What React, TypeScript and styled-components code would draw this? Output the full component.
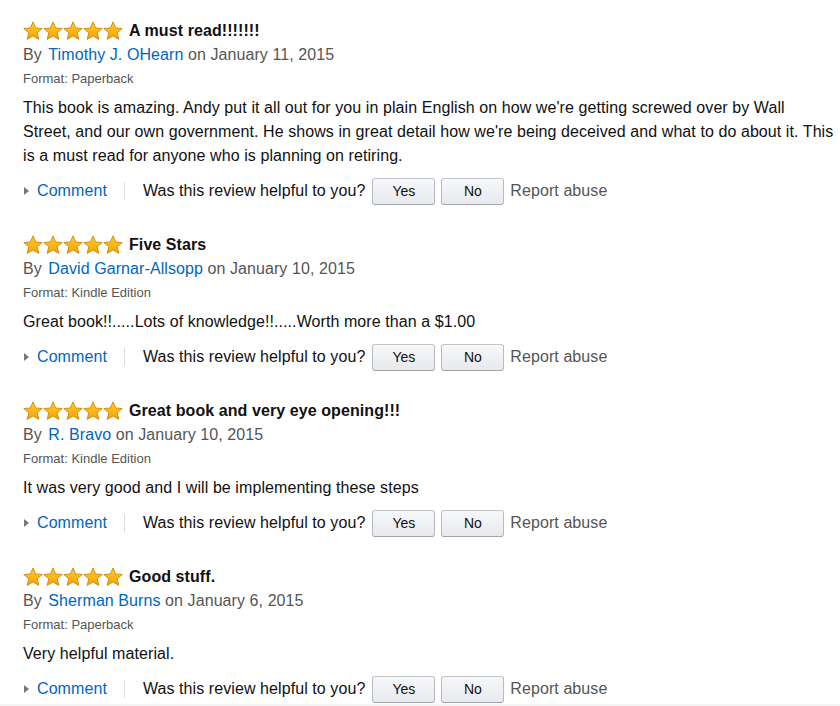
import * as React from 'react';
import styled, { createGlobalStyle } from 'styled-components';

const GlobalStyle = createGlobalStyle`
  html, body {
    margin: 0;
    padding: 0;
    background: #ffffff;
    font-family: "Liberation Sans", Arial, sans-serif;
    color: #111111;
    letter-spacing: 0.08px;
  }
`;

const Page = styled.div`
  display: flex;
  flex-direction: column;
  gap: 28px;
  padding: 19px 0 0 23px;
  width: 817px;
`;

const Review = styled.div`
  display: flex;
  flex-direction: column;
`;

const TitleRow = styled.div`
  display: flex;
  align-items: center;
  height: 24px;
`;

const Stars = styled.span`
  display: inline-flex;
  width: 100px;
`;

const Title = styled.span`
  font-size: 16px;
  font-weight: bold;
  margin-left: 6px;
  color: #111;
`;

const ByLine = styled.div`
  font-size: 16px;
  line-height: 24px;
  color: #555555;
`;

const AuthorLink = styled.a`
  color: #0066c0;
  text-decoration: none;
  margin-left: 2px;
`;

const Format = styled.div`
  font-size: 13px;
  line-height: 24px;
  color: #555555;
  letter-spacing: 0;
`;

const Body = styled.p`
  margin: 5px 0 0 0;
  font-size: 16px;
  line-height: 24px;
  color: #111111;
  white-space: pre-line;
`;

const ActionRow = styled.div`
  display: flex;
  align-items: center;
  height: 28px;
  margin-top: 9px;
  font-size: 16px;
`;

const Caret = styled.span`
  width: 0;
  height: 0;
  border-top: 4px solid transparent;
  border-bottom: 4px solid transparent;
  border-left: 5px solid #777777;
  margin: 0 8px 0 1px;
`;

const CommentLink = styled.a`
  color: #0066c0;
  text-decoration: none;
`;

const Divider = styled.span`
  width: 1px;
  height: 18px;
  background: #dddddd;
  margin: 0 18px 0 17px;
`;

const Question = styled.span`
  color: #111111;
  margin-right: 7px;
`;

const VoteButton = styled.button`
  width: 63px;
  height: 27px;
  margin-right: 6px;
  padding: 0;
  border: 1px solid #adb1b8;
  border-color: #c2c4c8 #b8bbc0 #a2a6ac;
  border-radius: 3px;
  background: linear-gradient(to bottom, #f7f8fa, #e7e9ec);
  font-family: "Liberation Sans", Arial, sans-serif;
  font-size: 14px;
  color: #111111;
`;

const ReportLink = styled.span`
  color: #555555;
`;

const BottomBand = styled.div`
  height: 3px;
  margin-top: 1px;
  background: #f3f3f3;
`;

const Star = () => (
  <svg width="20" height="20" viewBox="0 0 20 20">
    <defs>
      <linearGradient id="starFill" x1="0" y1="0" x2="0" y2="1">
        <stop offset="0" stopColor="#ffcc33" />
        <stop offset="1" stopColor="#f5a300" />
      </linearGradient>
    </defs>
    <polygon
      points="10,0.9 12.6,7 19.2,7.5 14.2,11.8 15.8,18.4 10,14.9 4.2,18.4 5.8,11.8 0.8,7.5 7.4,7"
      fill="url(#starFill)"
      stroke="#d08600"
      strokeWidth="0.9"
      strokeLinejoin="round"
    />
  </svg>
);

type ReviewData = {
  title: string;
  author: string;
  date: string;
  format: string;
  text: string;
};

const reviews: ReviewData[] = [
  {
    title: 'A must read!!!!!!!',
    author: 'Timothy J. OHearn',
    date: 'January 11, 2015',
    format: 'Paperback',
    text: "This book is amazing. Andy put it all out for you in plain English on how we're getting screwed over by Wall\nStreet, and our own government. He shows in great detail how we're being deceived and what to do about it. This\nis a must read for anyone who is planning on retiring.",
  },
  {
    title: 'Five Stars',
    author: 'David Garnar-Allsopp',
    date: 'January 10, 2015',
    format: 'Kindle Edition',
    text: 'Great book!!.....Lots of knowledge!!.....Worth more than a $1.00',
  },
  {
    title: 'Great book and very eye opening!!!',
    author: 'R. Bravo',
    date: 'January 10, 2015',
    format: 'Kindle Edition',
    text: 'It was very good and I will be implementing these steps',
  },
  {
    title: 'Good stuff.',
    author: 'Sherman Burns',
    date: 'January 6, 2015',
    format: 'Paperback',
    text: 'Very helpful material.',
  },
];

const ReviewItem = ({ review }: { review: ReviewData }) => (
  <Review>
    <TitleRow>
      <Stars>
        {[0, 1, 2, 3, 4].map(i => <Star key={i} />)}
      </Stars>
      <Title>{review.title}</Title>
    </TitleRow>
    <ByLine>
      By <AuthorLink href="#">{review.author}</AuthorLink> on {review.date}
    </ByLine>
    <Format>Format: {review.format}</Format>
    <Body>{review.text}</Body>
    <ActionRow>
      <Caret />
      <CommentLink href="#">Comment</CommentLink>
      <Divider />
      <Question>Was this review helpful to you?</Question>
      <VoteButton>Yes</VoteButton>
      <VoteButton>No</VoteButton>
      <ReportLink>Report abuse</ReportLink>
    </ActionRow>
  </Review>
);

export default function App() {
  return (
    <>
      <GlobalStyle />
      <Page>
        {reviews.map((r, i) => <ReviewItem key={i} review={r} />)}
      </Page>
      <BottomBand />
    </>
  );
}
